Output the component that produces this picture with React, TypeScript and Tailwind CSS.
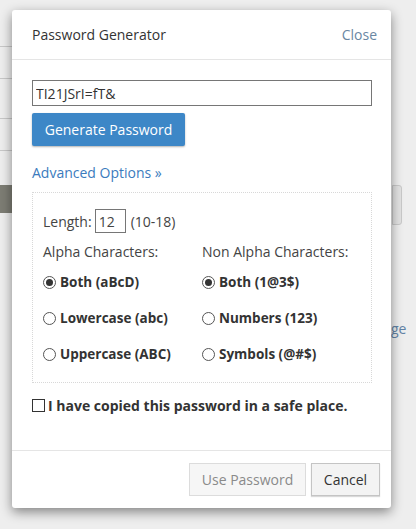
import { useState } from "react";

const ALPHA = ["Both (aBcD)", "Lowercase (abc)", "Uppercase (ABC)"];
const NON_ALPHA = ["Both (1@3$)", "Numbers (123)", "Symbols (@#$)"];

function Radio({ checked }: { checked: boolean }) {
  return (
    <span className="flex h-[13px] w-[13px] shrink-0 items-center justify-center rounded-full border border-[#555] bg-white">
      {checked && <span className="h-[7px] w-[7px] rounded-full bg-[#333]" />}
    </span>
  );
}

function RadioGroup({
  title,
  options,
  value,
  onChange,
}: {
  title: string;
  options: string[];
  value: number;
  onChange: (i: number) => void;
}) {
  return (
    <div className="w-[159px] shrink-0">
      <p className="h-[20px] leading-[20px]">{title}</p>
      <div className="mt-[10px] flex flex-col gap-[16px]">
        {options.map((o, i) => (
          <label
            key={o}
            onClick={() => onChange(i)}
            className="flex h-[20px] cursor-pointer items-center gap-[4px] text-[13.5px] font-bold text-[#333]"
          >
            <Radio checked={i === value} />
            {o}
          </label>
        ))}
      </div>
    </div>
  );
}

export default function App() {
  const [alpha, setAlpha] = useState(0);
  const [nonAlpha, setNonAlpha] = useState(0);
  const [copied, setCopied] = useState(false);

  return (
    <div
      className="relative h-[529px] w-[416px] overflow-hidden bg-[#eeeeee] pl-[12px] pt-[10px] text-[14px] text-[#444]"
      style={{ fontFamily: '"Open Sans", "Noto Sans", sans-serif' }}
    >
      {/* page behind the overlay */}
      <div className="absolute left-0 top-[46px] h-px w-[12px] bg-[#c8c8c8]" />
      <div className="absolute left-0 top-[78px] h-px w-[12px] bg-[#c8c8c8]" />
      <div className="absolute left-0 top-[118px] h-px w-[12px] bg-[#c8c8c8]" />
      <div className="absolute left-0 top-[150px] h-px w-[12px] bg-[#c8c8c8]" />
      <div className="absolute left-0 top-[185px] h-[28px] w-[12px] bg-[#7d7d74]" />
      <div className="absolute left-[392px] top-[185px] h-[40px] w-[10px] rounded-r-[3px] border border-[#c9c9c9] bg-[#e2e2e2]" />
      <span className="absolute left-[391px] top-[318px] text-[14px] text-[#6283a6]">ge</span>

      <div className="relative flex h-[498px] w-[379px] flex-col rounded-[3px] bg-white shadow-[0_4px_12px_rgba(0,0,0,0.45)]">
        <div className="flex h-[50px] items-center justify-between border-b border-[#e5e5e5] pl-[20px] pr-[14px]">
          <h1 className="text-[14px] text-[#333]">Password Generator</h1>
          <button type="button" className="text-[14px] text-[#6a87a3]">
            Close
          </button>
        </div>

        <div className="flex flex-1 flex-col px-[20px] pt-[20px]">
          <input
            readOnly
            value="TI21JSrI=fT&"
            className="h-[26px] w-[340px] border border-[#767676] px-[3px] text-[14px] text-[#333] outline-none"
          />
          <button
            type="button"
            className="mt-[7px] h-[33px] w-[153px] rounded-[2px] bg-[#3d87c7] text-[14px] text-white shadow-[0_1px_2px_rgba(0,0,0,0.3)]"
          >
            Generate Password
          </button>
          <a className="mt-[17px] h-[20px] leading-[20px] text-[#3b7bbd]">Advanced Options »</a>

          <div className="mt-[9px] h-[191px] w-[340px] border border-dotted border-[#d8d8d8] px-[10px] pt-[16px]">
            <div className="flex h-[24px] items-center gap-[2px]">
              <span>Length:</span>
              <input
                readOnly
                value="12"
                className="ml-[1px] h-[24px] w-[31px] border border-[#767676] px-[3px] text-[14px] text-[#444] outline-none"
              />
              <span className="ml-[3px]">(10-18)</span>
            </div>
            <div className="mt-[9px] flex">
              <RadioGroup title="Alpha Characters:" options={ALPHA} value={alpha} onChange={setAlpha} />
              <RadioGroup
                title="Non Alpha Characters:"
                options={NON_ALPHA}
                value={nonAlpha}
                onChange={setNonAlpha}
              />
            </div>
          </div>

          <label
            onClick={() => setCopied(!copied)}
            className="mt-[12px] flex h-[20px] cursor-pointer items-center gap-[3px] font-bold text-[#333]"
          >
            <span className="flex h-[13px] w-[13px] items-center justify-center border border-[#333] bg-white text-[10px] leading-none">
              {copied ? "✓" : ""}
            </span>
            I have copied this password in a safe place.
          </label>
        </div>

        <div className="flex h-[58px] items-center justify-end gap-[5px] border-t border-[#e5e5e5] pr-[11px]">
          <button
            type="button"
            disabled
            className="h-[33px] w-[117px] border border-[#dcdcdc] bg-[#f6f6f6] text-[14px] text-[#8a8a8a]"
          >
            Use Password
          </button>
          <button
            type="button"
            className="h-[33px] w-[69px] border border-[#c4c4c4] bg-[#f3f3f3] text-[14px] text-[#333] shadow-[0_1px_1px_rgba(0,0,0,0.15)]"
          >
            Cancel
          </button>
        </div>
      </div>
    </div>
  );
}
